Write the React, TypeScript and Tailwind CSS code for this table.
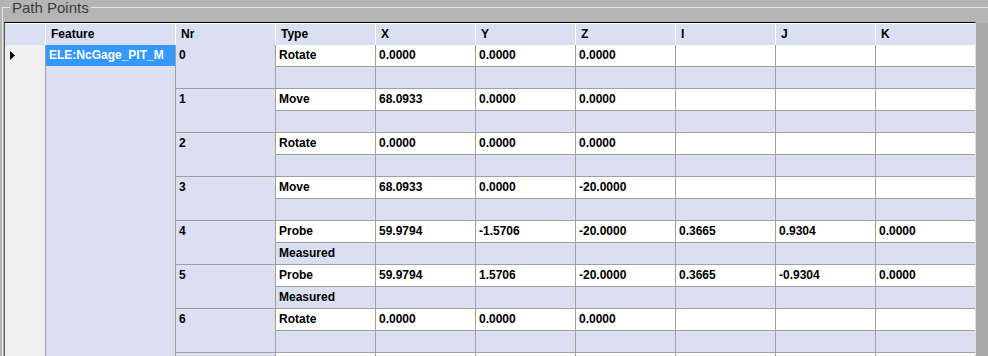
import React from 'react';

interface PathRow {
  nr: string;
  type: string;
  values: string[];
  sub: string;
}

const rows: PathRow[] = [
  { nr: '0', type: 'Rotate', values: ['0.0000', '0.0000', '0.0000', '', '', ''], sub: '' },
  { nr: '1', type: 'Move', values: ['68.0933', '0.0000', '0.0000', '', '', ''], sub: '' },
  { nr: '2', type: 'Rotate', values: ['0.0000', '0.0000', '0.0000', '', '', ''], sub: '' },
  { nr: '3', type: 'Move', values: ['68.0933', '0.0000', '-20.0000', '', '', ''], sub: '' },
  { nr: '4', type: 'Probe', values: ['59.9794', '-1.5706', '-20.0000', '0.3665', '0.9304', '0.0000'], sub: 'Measured' },
  { nr: '5', type: 'Probe', values: ['59.9794', '1.5706', '-20.0000', '0.3665', '-0.9304', '0.0000'], sub: 'Measured' },
  { nr: '6', type: 'Rotate', values: ['0.0000', '0.0000', '0.0000', '', '', ''], sub: '' },
  // only the top edge of this row shows, so it is left blank
  { nr: '', type: '', values: ['', '', '', '', '', ''], sub: '' },
];

const headers = ['Nr', 'Type', 'X', 'Y', 'Z', 'I', 'J'];

const DataLine: React.FC<{ cells: string[]; white: boolean }> = ({ cells, white }) => (
  <div className={white ? 'flex h-[22px] bg-white' : 'flex h-[22px] bg-[#dae0f1]'}>
    {cells.map((c, i) => (
      <div
        key={i}
        className={
          i === cells.length - 1
            ? 'w-[99px] shrink-0 border-b border-[#a0a0a0] pl-[3px] leading-[21px] whitespace-nowrap'
            : 'w-[100px] shrink-0 border-b border-r border-[#a0a0a0] pl-[3px] leading-[21px] whitespace-nowrap'
        }
      >
        {c}
      </div>
    ))}
  </div>
);

const Grid: React.FC = () => (
  <div className="ml-px w-[972px] shrink-0 border-t border-l border-r border-t-black border-l-[#5a5a5a] border-r-[#e0e0e0]">
    {/* column headers */}
    <div className="flex h-[22px] border-t border-white bg-[#dae0f1] leading-[21px]">
      <div className="w-[41px] shrink-0 border-r border-white" />
      <div className="w-[130px] shrink-0 border-r border-white pl-[5px]">Feature</div>
      {headers.map(h => (
        <div key={h} className="w-[100px] shrink-0 border-r border-white pl-[5px]">
          {h}
        </div>
      ))}
      <div className="w-[99px] shrink-0 pl-[5px]">K</div>
    </div>

    <div className="flex">
      {/* row header */}
      <div className="w-[41px] shrink-0 border-r border-[#a0a0a0] bg-[#f0f0f0]">
        <div className="flex h-[21px] items-center pl-[5px]">
          <svg width="5" height="9" viewBox="0 0 5 9">
            <path d="M0 0L5 4.5L0 9Z" fill="#000" />
          </svg>
        </div>
      </div>

      {/* feature (merged) */}
      <div className="w-[130px] shrink-0 border-r border-[#a0a0a0] bg-[#dae0f1]">
        <div className="h-[21px] bg-[#3399ff] pl-[3px] leading-[21px] text-white whitespace-nowrap">
          ELE:NcGage_PIT_M
        </div>
      </div>

      <div className="flex flex-col">
        {rows.map((r, idx) => (
          <div key={idx} className="flex">
            <div className="h-[44px] w-[100px] shrink-0 border-b border-r border-[#a0a0a0] bg-[#dae0f1] pl-[3px] leading-[21px]">
              {r.nr}
            </div>
            <div className="flex flex-col">
              <DataLine cells={[r.type, ...r.values]} white />
              <DataLine cells={[r.sub, '', '', '', '', '', '']} white={false} />
            </div>
          </div>
        ))}
      </div>
    </div>
  </div>
);

export default function App() {
  return (
    <div className="h-[356px] w-[988px] overflow-hidden bg-[#b4b4b4] font-['Liberation_Sans',Arial,sans-serif] text-[12px] font-bold text-black">
      <div className="h-full pl-[2px] pt-[7px]">
        <div className="h-full border-l border-t border-[#e6e6e6]">
          <div className="-mt-[8px] ml-[7px] w-fit bg-[#b4b4b4] px-[2px] text-[15px] leading-[15px] font-normal text-[#3c3c3c]">
            Path Points
          </div>
          <div className="mt-[7px] flex">
            <Grid />
            <div className="mt-px flex-1 bg-[#a9a9a9]" />
          </div>
        </div>
      </div>
    </div>
  );
}
